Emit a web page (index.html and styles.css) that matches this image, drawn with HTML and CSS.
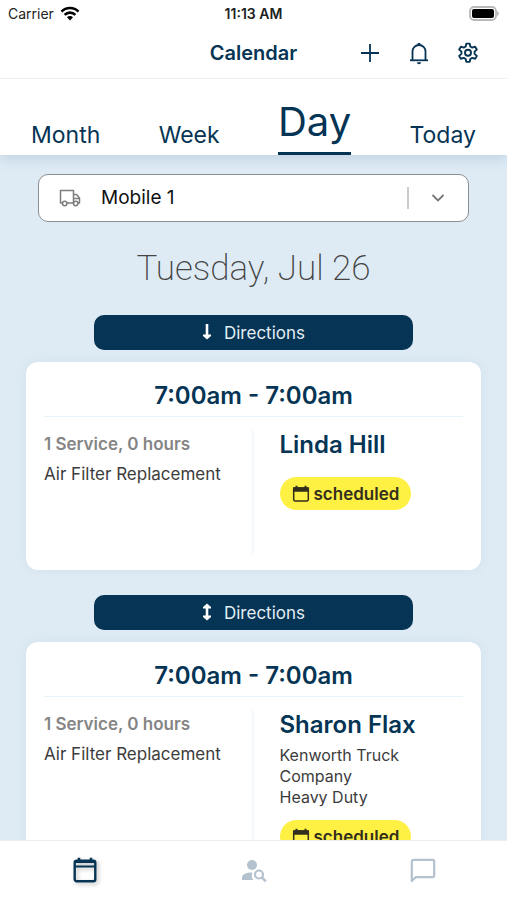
FILE: index.html
```html
<!DOCTYPE html>
<html lang="en">
<head>
    <meta charset="UTF-8">
    <meta name="viewport" content="width=device-width, initial-scale=1">
    <title>Calendar</title>
    <link rel="stylesheet" href="styles.css">
</head>
<body>
    <div class="status-bar">
        <div class="carrier">
            Carrier
            <svg width="20" height="15" viewBox="0 0 20 15" fill="none" stroke="#000" stroke-width="2.6">
                <path d="M1.5 5.6a12 12 0 0 1 17 0"/>
                <path d="M4.6 8.9a7.6 7.6 0 0 1 10.8 0"/>
                <path d="M10 14.4l-3-3.1a4.2 4.2 0 0 1 6 0z" fill="#000" stroke="none"/>
            </svg>
        </div>
        <div class="clock">11:13 AM</div>
        <div class="battery">
            <svg width="31" height="15" viewBox="0 0 31 15">
                <rect x="2" y="1" width="26" height="13" rx="4" fill="#fff" stroke="#b9b9b9" stroke-width="1.8"/>
                <rect x="4" y="3" width="22" height="9" rx="2" fill="#000"/>
                <path d="M29 5c2.400.8 2.400 4.200 0 5z" fill="#b9b9b9"/>
            </svg>
        </div>
    </div>

    <header class="header">
        <h1>Calendar</h1>
        <div class="header-actions">
            <button type="button" aria-label="Add">
                <svg width="24" height="24" viewBox="0 0 24 24" fill="none" stroke="currentColor" stroke-width="1.8">
                    <path d="M12 3v18M3 12h18"/>
                </svg>
            </button>
            <button type="button" aria-label="Notifications">
                <svg width="24" height="24" viewBox="0 0 24 24" fill="none" stroke="currentColor" stroke-width="1.8" stroke-linejoin="round">
                    <path d="M5.5 19v-8.500a6.500 6.500 0 0 1 13 0V19"/>
                    <path d="M3 19.300h18"/>
                    <path d="M12 4V2" stroke-width="2.600"/>
                    <path d="M10 21.200h4a2 2 0 0 1-4 0z" fill="currentColor" stroke="none"/>
                </svg>
            </button>
            <button type="button" aria-label="Settings">
                <svg width="24" height="24" viewBox="0 0 24 24" fill="none" stroke="currentColor" stroke-width="1.9" stroke-linejoin="round">
                    <path d="M10.300 2.600h3.400l.6 2.900 2 1.100 2.800-.9 1.700 2.900-2.200 2v2.300l2.200 2-1.700 2.900-2.800-.9-2 1.100-.6 2.900h-3.400l-.6-2.900-2-1.100-2.800.9-1.700-2.900 2.200-2v-2.300l-2.200-2 1.700-2.900 2.800.9 2-1.100z"/>
                    <circle cx="12" cy="11.800" r="3"/>
                </svg>
            </button>
        </div>
    </header>

    <nav class="tabs">
        <a href="#month">Month</a>
        <a href="#week">Week</a>
        <a href="#day" class="active">Day</a>
        <a href="#today">Today</a>
    </nav>

    <main class="schedule">
        <div class="vehicle">
            <label for="vehicle" aria-label="Vehicle">
                <svg width="22" height="20" viewBox="0 0 22 20" fill="none" stroke="#7d7d7d" stroke-width="1.5" stroke-linejoin="round">
                    <path d="M3.500 15H1.500V2.500h13V15H8"/>
                    <path d="M14.500 6.500h3l3 3.500v5h-1.500"/>
                    <path d="M14.500 10.500h6"/>
                    <circle cx="5.700" cy="15.500" r="2.200"/>
                    <circle cx="16.700" cy="15.500" r="2.200"/>
                </svg>
            </label>
            <select id="vehicle">
                <option>Mobile 1</option>
            </select>
            <svg width="14" height="10" viewBox="0 0 14 10" fill="none" stroke="#777" stroke-width="1.8">
                <path d="M1.500 2l5.500 5.500L12.500 2"/>
            </svg>
        </div>

        <h2>Tuesday, Jul 26</h2>

        <button type="button" class="directions">
            <svg width="10" height="20" viewBox="0 0 10 20" fill="none" stroke="#fff" stroke-width="2.6">
                <path d="M5 1v13"/>
                <path d="M1 11.500h8v1.500L5 16.500 1 13z" fill="#fff" stroke="none"/>
            </svg>
            Directions
        </button>
        <article class="card">
            <h3>7:00am - 7:00am</h3>
            <div class="card-body">
                <div class="services">
                    <strong>1 Service, 0 hours</strong>
                    <p>Air Filter Replacement</p>
                </div>
                <div class="customer">
                    <h4>Linda Hill</h4>
                    <div class="details"></div>
                    <span class="badge">
                        <svg width="18" height="18" viewBox="0 0 18 18" fill="none" stroke="currentColor" stroke-width="1.5">
                            <rect x="1.700" y="3" width="14.600" height="13" rx="1.500"/>
                            <path d="M1.700 3h14.600v3H1.700z" fill="currentColor"/>
                            <path d="M4.500 3V.8M13.500 3V.8" stroke-width="2"/>
                        </svg>
                        scheduled
                    </span>
                </div>
            </div>
        </article>

        <button type="button" class="directions">
            <svg width="10" height="20" viewBox="0 0 10 20" fill="none" stroke="#fff" stroke-width="2.6">
                <path d="M5 3v12"/>
                <path d="M1 12.500h8V14l-4 3.500L1 14zM1 5.500h8V4L5 .5 1 4z" fill="#fff" stroke="none"/>
            </svg>
            Directions
        </button>
        <article class="card">
            <h3>7:00am - 7:00am</h3>
            <div class="card-body">
                <div class="services">
                    <strong>1 Service, 0 hours</strong>
                    <p>Air Filter Replacement</p>
                </div>
                <div class="customer">
                    <h4>Sharon Flax</h4>
                    <div class="details">
                        <p>Kenworth Truck Company</p>
                        <p>Heavy Duty</p>
                    </div>
                    <span class="badge">
                        <svg width="18" height="18" viewBox="0 0 18 18" fill="none" stroke="currentColor" stroke-width="1.5">
                            <rect x="1.700" y="3" width="14.600" height="13" rx="1.500"/>
                            <path d="M1.700 3h14.600v3H1.700z" fill="currentColor"/>
                            <path d="M4.500 3V.8M13.500 3V.8" stroke-width="2"/>
                        </svg>
                        scheduled
                    </span>
                </div>
            </div>
        </article>
    </main>

    <nav class="bottom-nav">
        <a href="#calendar" class="active" aria-label="Calendar">
            <svg width="26" height="28" viewBox="0 0 26 28" fill="none" stroke="currentColor" stroke-width="2.4">
                <rect x="2.700" y="3.700" width="20.600" height="20.600" rx="2"/>
                <path d="M2.700 9.500h20.600" stroke-width="2"/>
                <path d="M3 5h20" stroke-width="2"/>
                <path d="M7 4V.8M19 4V.8" stroke-width="2.600"/>
            </svg>
        </a>
        <a href="#customers" aria-label="Customers">
            <svg width="26" height="24" viewBox="0 0 26 24" fill="none">
                <circle cx="11" cy="6" r="5" fill="currentColor"/>
                <path d="M1 21v-2.500c0-3.600 5-5.300 10.400-5.100-1 2.400-.8 5.400.8 7.600z" fill="currentColor"/>
                <circle cx="18" cy="15.500" r="4" stroke="currentColor" stroke-width="2.2"/>
                <path d="M20.800 18.300l4 4" stroke="currentColor" stroke-width="2.5"/>
            </svg>
        </a>
        <a href="#messages" aria-label="Messages">
            <svg width="26" height="26" viewBox="0 0 26 26" fill="none" stroke="currentColor" stroke-width="2.2" stroke-linejoin="round">
                <path d="M1.800 23V3.500a1.700 1.700 0 0 1 1.700-1.700h19a1.700 1.700 0 0 1 1.700 1.700v14a1.700 1.700 0 0 1-1.700 1.700H5.600z"/>
            </svg>
        </a>
    </nav>
</body>
</html>
```

FILE: styles.css
```css
* {
    box-sizing: border-box;
}

body {
    margin: 0;
    height: 100vh;
    display: flex;
    flex-direction: column;
    overflow: hidden;
    background-color: #fff;
    color: #3c3c3c;
    font-family: Inter, "Liberation Sans", sans-serif;
    font-size: 16px;
}

h1, h2, h3, h4, p {
    margin: 0;
}

svg {
    display: block;
    flex: none;
}

a {
    color: #053454;
    text-decoration: none;
}

button {
    border: none;
    padding: 0;
    background: none;
    color: #053454;
    font-family: inherit;
    cursor: pointer;
}

.status-bar,
.header {
    display: grid;
    grid-template-columns: 1fr auto 1fr;
    align-items: center;
    flex: none;
    background-color: #fff;
    position: relative;
    z-index: 2;
}

.status-bar {
    height: 27px;
    padding: 0 8px;
    font-size: 14px;
    color: #222;
}

.carrier {
    display: flex;
    align-items: center;
    gap: 6px;
}

.clock {
    font-weight: 600;
}

.battery {
    justify-self: end;
}

.header {
    height: 52px;
    padding: 0 15px;
    border-bottom: 1px solid #f0f0f0;
}

.header h1 {
    grid-column: 2;
    color: #053454;
    font-size: 20px;
    font-weight: 600;
}

.header-actions {
    display: flex;
    justify-content: flex-end;
}

.header-actions button {
    width: 49px;
    height: 48px;
    display: flex;
    align-items: center;
    justify-content: center;
}

.tabs {
    display: flex;
    flex: none;
    justify-content: space-between;
    align-items: flex-end;
    height: 76px;
    padding: 0 31px;
    box-shadow: 0 4px 12px rgba(40, 80, 110, 0.15);
    position: relative;
    z-index: 1;
}

.tabs a {
    padding-bottom: 5px;
    font-size: 23px;
    line-height: 30px;
}

.tabs .active {
    padding-bottom: 8px;
    border-bottom: 3px solid #053454;
    font-size: 40px;
    line-height: 44px;
}

.schedule {
    flex: 1;
    min-height: 0;
    overflow: hidden;
    padding: 19px 26px;
    background-color: #deebf5;
}

.vehicle {
    display: flex;
    align-items: center;
    height: 48px;
    margin: 0 12px;
    padding: 0 23px 0 20px;
    border: 1px solid #8a8f94;
    border-radius: 10px;
    background-color: #fff;
}

.vehicle select {
    flex: 1;
    height: 22px;
    margin: 0 22px 0 20px;
    padding: 0;
    appearance: none;
    border: none;
    border-right: 2px solid #ccc;
    background: none;
    color: #111;
    font-family: inherit;
    font-size: 19px;
    line-height: 22px;
}

.schedule h2 {
    margin: 24px 0;
    color: #444;
    font-family: Roboto, Inter, sans-serif;
    font-size: 35px;
    font-weight: 200;
    line-height: 45px;
    text-align: center;
}

.directions {
    display: flex;
    align-items: center;
    justify-content: center;
    gap: 12px;
    width: 70%;
    height: 35px;
    margin: 0 auto 12px;
    border-radius: 10px;
    background-color: #053454;
    color: #e4eef6;
    font-size: 17px;
}

.card {
    margin-bottom: 25px;
    padding: 19px 18px 16px;
    border-radius: 12px;
    background-color: #fff;
    box-shadow: 0 0 12px rgba(40, 80, 110, 0.06);
}

.card h3 {
    padding-bottom: 5px;
    border-bottom: 1px solid #e4f4f8;
    color: #053454;
    font-size: 24px;
    font-weight: 600;
    line-height: 30px;
    text-align: center;
}

.card-body {
    display: grid;
    grid-template-columns: 1fr 1fr;
    min-height: 124px;
    margin-top: 13px;
}

.services {
    padding-top: 3px;
    border-right: 2px solid #f3f9fc;
    font-size: 17px;
    line-height: 22px;
}

.services strong {
    color: #858585;
    font-weight: 600;
}

.services p {
    margin-top: 8px;
}

.customer {
    padding-left: 26px;
}

.customer h4 {
    color: #053454;
    font-size: 24px;
    font-weight: 600;
    line-height: 30px;
}

.details {
    padding: 5px 0 12px;
    line-height: 21px;
}

.badge {
    display: inline-flex;
    align-items: center;
    gap: 4px;
    height: 33px;
    padding: 0 12px;
    border-radius: 17px;
    background-color: #fff044;
    color: #332f1c;
    font-size: 17px;
    font-weight: 600;
}

.bottom-nav {
    display: grid;
    grid-template-columns: repeat(3, 1fr);
    flex: none;
    height: 60px;
    border-top: 1px solid #e8edf0;
    background-color: #fff;
}

.bottom-nav a {
    display: flex;
    align-items: center;
    justify-content: center;
    color: #b4c2cf;
}

.bottom-nav .active {
    color: #053454;
    filter: drop-shadow(2px 2px 2px rgba(0, 0, 0, 0.25));
}
```
